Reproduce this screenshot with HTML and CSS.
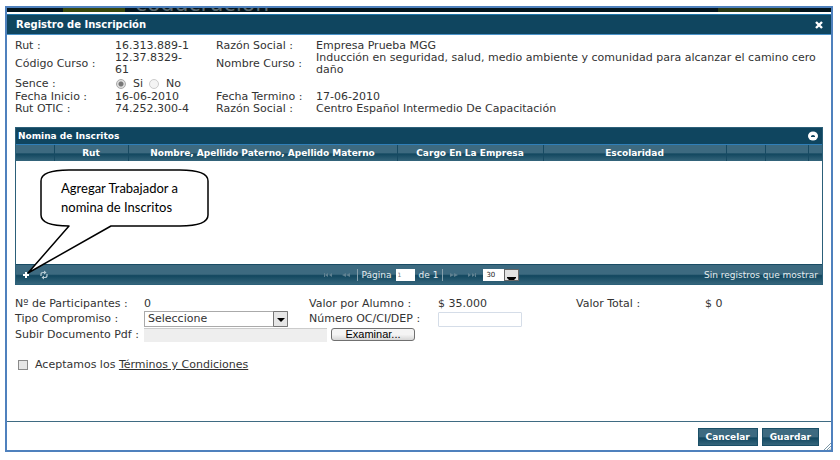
FILE: index.html
```html
<!DOCTYPE html>
<html lang="es">
<head>
<meta charset="utf-8">
<meta name="viewport" content="width=device-width, initial-scale=1">
<title>Registro de Inscripción</title>
<link rel="stylesheet" href="styles.css">
</head>
<body>
<div class="frame">
  <div class="site-strip"><span class="strip-green"></span><span class="strip-name">coducrución</span><span class="strip-olive"></span></div>
  <main class="dialog">
    <header class="dialog-title">
      <h1>Registro de Inscripción</h1>
      <button class="close" type="button" aria-label="Cerrar"><svg width="8" height="8" viewBox="0 0 8 8"><path d="M1 1l6 6M7 1L1 7" stroke="#fff" stroke-width="2.4"/></svg></button>
    </header>
    <form class="dialog-body">
      <dl class="info">
        <dt>Rut :</dt><dd>16.313.889-1</dd><dt>Razón Social :</dt><dd>Empresa Prueba MGG</dd>
        <dt>Código Curso :</dt><dd class="course-code">12.37.8329-<wbr>61</dd><dt>Nombre Curso :</dt><dd>Inducción en seguridad, salud, medio ambiente y comunidad para alcanzar el camino cero daño</dd>
        <dt>Sence :</dt>
        <dd class="sence">
          <input type="radio" name="sence" id="si" checked disabled><label for="si">Si</label>
          <input type="radio" name="sence" id="no" disabled><label for="no">No</label>
        </dd>
        <dt>Fecha Inicio :</dt><dd>16-06-2010</dd><dt>Fecha Termino :</dt><dd>17-06-2010</dd>
        <dt>Rut OTIC :</dt><dd>74.252.300-4</dd><dt>Razón Social :</dt><dd>Centro Español Intermedio De Capacitación</dd>
      </dl>

      <section class="roster">
        <div class="roster-title">
          <h2>Nomina de Inscritos</h2>
          <button class="collapse" type="button" aria-label="Contraer"><svg width="10" height="10" viewBox="0 0 10 10"><ellipse cx="5" cy="5" rx="5" ry="4.500" fill="#fff"/><path d="M3 6V5Q5 3 7 5V6z" fill="#0f455f"/></svg></button>
        </div>
        <table>
          <colgroup><col class="c-id"><col class="c-rut"><col class="c-name"><col class="c-job"><col class="c-school"><col class="c-edit"><col class="c-del"><col class="c-end"></colgroup>
          <thead><tr><th></th><th>Rut</th><th>Nombre, Apellido Paterno, Apellido Materno</th><th>Cargo En La Empresa</th><th>Escolaridad</th><th></th><th></th><th></th></tr></thead>
        </table>
        <div class="roster-empty"></div>
        <div class="pager">
          <div class="pager-tools">
            <button type="button" aria-label="Agregar"><svg width="8" height="8" viewBox="0 0 8 8"><path d="M4 1v6M1 4h6" stroke="#fff" stroke-width="2"/></svg></button>
            <button type="button" aria-label="Recargar"><svg width="10" height="10" viewBox="0 0 10 10"><path d="M2 6V4.500Q2 2.500 4 2.500H6M8 4v1.500Q8 7.500 6 7.500H4" fill="none" stroke="#b9ccd4" stroke-width="1.200"/><path d="M5 .5L7.500 2.500 5 4.500zM5 5.500L2.500 7.500 5 9.500z" fill="#b9ccd4"/></svg></button>
          </div>
          <div class="pager-nav">
            <button type="button" aria-label="Primera" disabled><svg width="8" height="6" viewBox="0 0 8 6"><path d="M0 1h1v4H0zM4 1v4L1 3zM8 1v4L5 3z"/></svg></button>
            <button type="button" aria-label="Anterior" disabled><svg width="8" height="6" viewBox="0 0 8 6"><path d="M4 1v4L0 3zM8 1v4L4 3z"/></svg></button>
            <span class="sep"></span>
            <label for="page">Página</label><input id="page" type="text" value="1"><span>de 1</span>
            <span class="sep"></span>
            <button type="button" aria-label="Siguiente" disabled><svg width="8" height="6" viewBox="0 0 8 6"><path d="M0 1v4l4-2zM4 1v4l4-2z"/></svg></button>
            <button type="button" aria-label="Última" disabled><svg width="8" height="6" viewBox="0 0 8 6"><path d="M7 1h1v4H7zM0 1v4l3-2zM4 1v4l3-2z"/></svg></button>
            <span class="rows"><select aria-label="Filas"><option>30</option></select><svg class="rows-arrow" width="15" height="12" viewBox="0 0 15 12"><path d="M0 0h15v12H0z" fill="#666"/><path d="M1 1h13v10H1z" fill="#e2e2e2"/><path d="M3 8h9v1l-2 2H5L3 9z" fill="#000"/></svg></span>
          </div>
          <p class="pager-info">Sin registros que mostrar</p>
        </div>
        <div class="callout">
          <svg width="184" height="106" viewBox="0 0 184 106"><path d="M29 57C10 57 1 53 1 46V12C1 5 10 1 29 1H140C159 1 168 5 168 12V46C168 53 159 57 140 57H71L-12 104L29 57Z" fill="#fff" stroke="#000" stroke-width="1.500" stroke-linejoin="round"/></svg>
          <p>Agregar Trabajador a<br>nomina de Inscritos</p>
        </div>
      </section>

      <div class="fields">
        <span>Nº de Participantes :</span><span>0</span><span>Valor por Alumno :</span><span>$ 35.000</span><span>Valor Total :</span><span>$ 0</span>
        <label for="tipo">Tipo Compromiso :</label>
        <span class="tipo"><select id="tipo"><option>Seleccione</option></select><svg class="tipo-arrow" width="15" height="16" viewBox="0 0 15 16"><path d="M.5.5h14v15H.5z" fill="#e6e6e6" stroke="#777"/><path d="M4 7h8l-4 4z" fill="#000"/></svg></span>
        <label for="numero">Número OC/CI/DEP :</label><input class="numero" id="numero" type="text">
        <label class="first" for="pdf">Subir Documento Pdf :</label>
        <div class="upload"><input id="pdf" type="text" readonly><button type="button">Examinar...</button></div>
      </div>

      <div class="terms"><input type="checkbox" id="terms"><label for="terms">Aceptamos los <a href="#">Términos y Condiciones</a></label></div>
    </form>
    <footer class="actions">
      <button type="button">Cancelar</button><button type="button">Guardar</button>
      <svg class="grip" width="7" height="7" viewBox="0 0 7 7"><path d="M0 7L7 0M3 7l4-4M5.500 7L7 5.500" stroke="#7d99a8"/></svg>
    </footer>
  </main>
</div>
</body>
</html>
```
FILE: styles.css
```css
* { box-sizing: border-box; }
body {
  margin: 0;
  padding: 6px 7px 8px 5px;
  background: #fff;
  color: #333;
  font: 11px/12px "DejaVu Sans", Verdana, sans-serif;
}
h1, h2, p, dl, dd { margin: 0; }
button, input, select { margin: 0; padding: 0; border: 0; font: inherit; color: inherit; }
button { display: flex; align-items: center; justify-content: center; background: none; }
svg { display: block; flex: none; }

.frame { border: 2px solid #4f81bd; }
.site-strip {
  display: grid;
  grid-template-columns: 56px 62px 10px 1fr 72px 41px;
  height: 4px;
  overflow: hidden;
  background: #03141c;
}
.strip-green { grid-column: 2; background: #38470c; }
.strip-name { grid-column: 4; margin-top: -15px; color: #59666b; font-size: 22px; line-height: 22px; }
.strip-olive { grid-column: 5; background: #293814; }

.dialog { padding-top: 2px; }
.dialog-title {
  display: flex;
  align-items: center;
  justify-content: space-between;
  height: 21px;
  padding: 0 8px 0 9px;
  border-top: 1px solid #1e75a9;
  border-bottom: 1px solid #4b92c8;
  background: #0f455f;
  color: #fff;
}
h1 { font-size: 10px; line-height: 12px; }
.dialog-body { padding: 5px 8px 0; }

.info { display: grid; grid-template-columns: 100px 101px 100px 1fr; grid-template-rows: 12px 24px 15px 12px 12px; align-items: center; }
.course-code { width: 75px; }
.sence { display: flex; align-items: center; grid-column: 2 / -1; }
.sence label { margin: 0 5px 0 7px; }
.sence input { width: 10px; height: 10px; margin-left: 1px; appearance: none; border: 1px solid #ccc; border-radius: 50%; background: #f4f4f4; }
.sence input:checked { border-color: #aaa; background: radial-gradient(#777 0 2px, #ddd 3px); }

.roster { position: relative; margin-top: 12px; border: 1px solid #2c6079; }
.roster-title {
  display: flex;
  align-items: center;
  justify-content: space-between;
  height: 17px;
  padding: 0 4px 0 2px;
  border-bottom: 1px solid #2f7fb9;
  background: #0f455f;
  color: #fff;
}
h2 { font-size: 9px; line-height: 12px; }
table { width: 100%; border-collapse: collapse; table-layout: fixed; }
.c-id { width: 38px; }
.c-rut { width: 74px; }
.c-job { width: 146px; }
.c-school { width: 183px; }
.c-edit { width: 39px; }
.c-del { width: 43px; }
.c-end { width: 14px; }
thead, .pager, .actions button { background: linear-gradient(#3d6a80 0 48%, #12475f 56%, #35657b); }
th { height: 16px; padding: 0; border-right: 1px solid #174a62; color: #fff; font-size: 9px; line-height: 12px; white-space: nowrap; }
th:last-child { border-right: 0; }
.roster-empty { height: 103px; }
.pager {
  display: grid;
  grid-template-columns: 1fr auto 1fr;
  align-items: center;
  height: 20px;
  padding: 0 4px 0 6px;
  border-top: 1px solid #194c64;
  color: #e6eef1;
  font-size: 9px;
}
.pager-tools { display: flex; gap: 9px; }
.pager-nav { display: flex; align-items: center; gap: 4px; }
.pager-nav button { width: 14px; fill: #5f8191; }
.pager-nav > input { width: 19px; height: 12px; padding-left: 2px; background: #fff; color: #777; font-size: 6px; }
.sep { width: 1px; height: 12px; background: #87a1ad; }
.rows { position: relative; }
.rows select { display: block; width: 36px; height: 12px; padding-left: 3px; appearance: none; background: #fff; color: #222; font-size: 7px; }
.rows-arrow { position: absolute; top: 0; right: 0; pointer-events: none; }
.pager-info { text-align: right; }

.callout { position: absolute; top: 41px; left: 24px; color: #000; }
.callout svg { overflow: visible; }
.callout p { position: absolute; top: 10px; left: 21px; font: 13px/19px Lato, Carlito, sans-serif; white-space: nowrap; }

.fields {
  display: grid;
  grid-template-columns: 129px 165px 129px 138px 129px 1fr;
  grid-template-rows: 14px 16px 16px;
  align-items: center;
  margin-top: 12px;
  white-space: nowrap;
}
.first { grid-column: 1; }
.tipo { position: relative; width: 144px; }
.tipo select { display: block; width: 100%; height: 16px; padding-left: 3px; appearance: none; border: 1px solid #aaa; background: #fff; }
.tipo-arrow { position: absolute; top: 0; right: 0; pointer-events: none; }
.numero { width: 84px; height: 15px; border: 1px solid #d5dde8; border-radius: 1px; }
.upload { display: flex; gap: 4px; grid-column: 2 / -1; }
.upload input { width: 183px; height: 14px; border-top: 1px solid #ccc; background: #eee; }
.upload button { width: 84px; height: 13px; border: 1px solid #707070; border-radius: 3px; background: linear-gradient(#f4f4f4 50%, #d6d6d6); color: #000; font: 11px/11px "Liberation Sans", Arial, sans-serif; }

.terms { display: flex; align-items: center; gap: 7px; margin: 16px 0 50px 3px; }
.terms input { width: 10px; height: 10px; appearance: none; border: 1px solid #8a8a8a; background: #e6e6e6; }
a { color: inherit; }

.actions { position: relative; display: flex; justify-content: flex-end; gap: 4px; padding: 6px 12px 4px; border-top: 1px solid #3f6b82; }
.actions button { height: 18px; padding: 0 7px; border: 1px solid #1b4f67; color: #fff; font-size: 9px; font-weight: bold; }
.grip { position: absolute; right: 0; bottom: 0; }
```
